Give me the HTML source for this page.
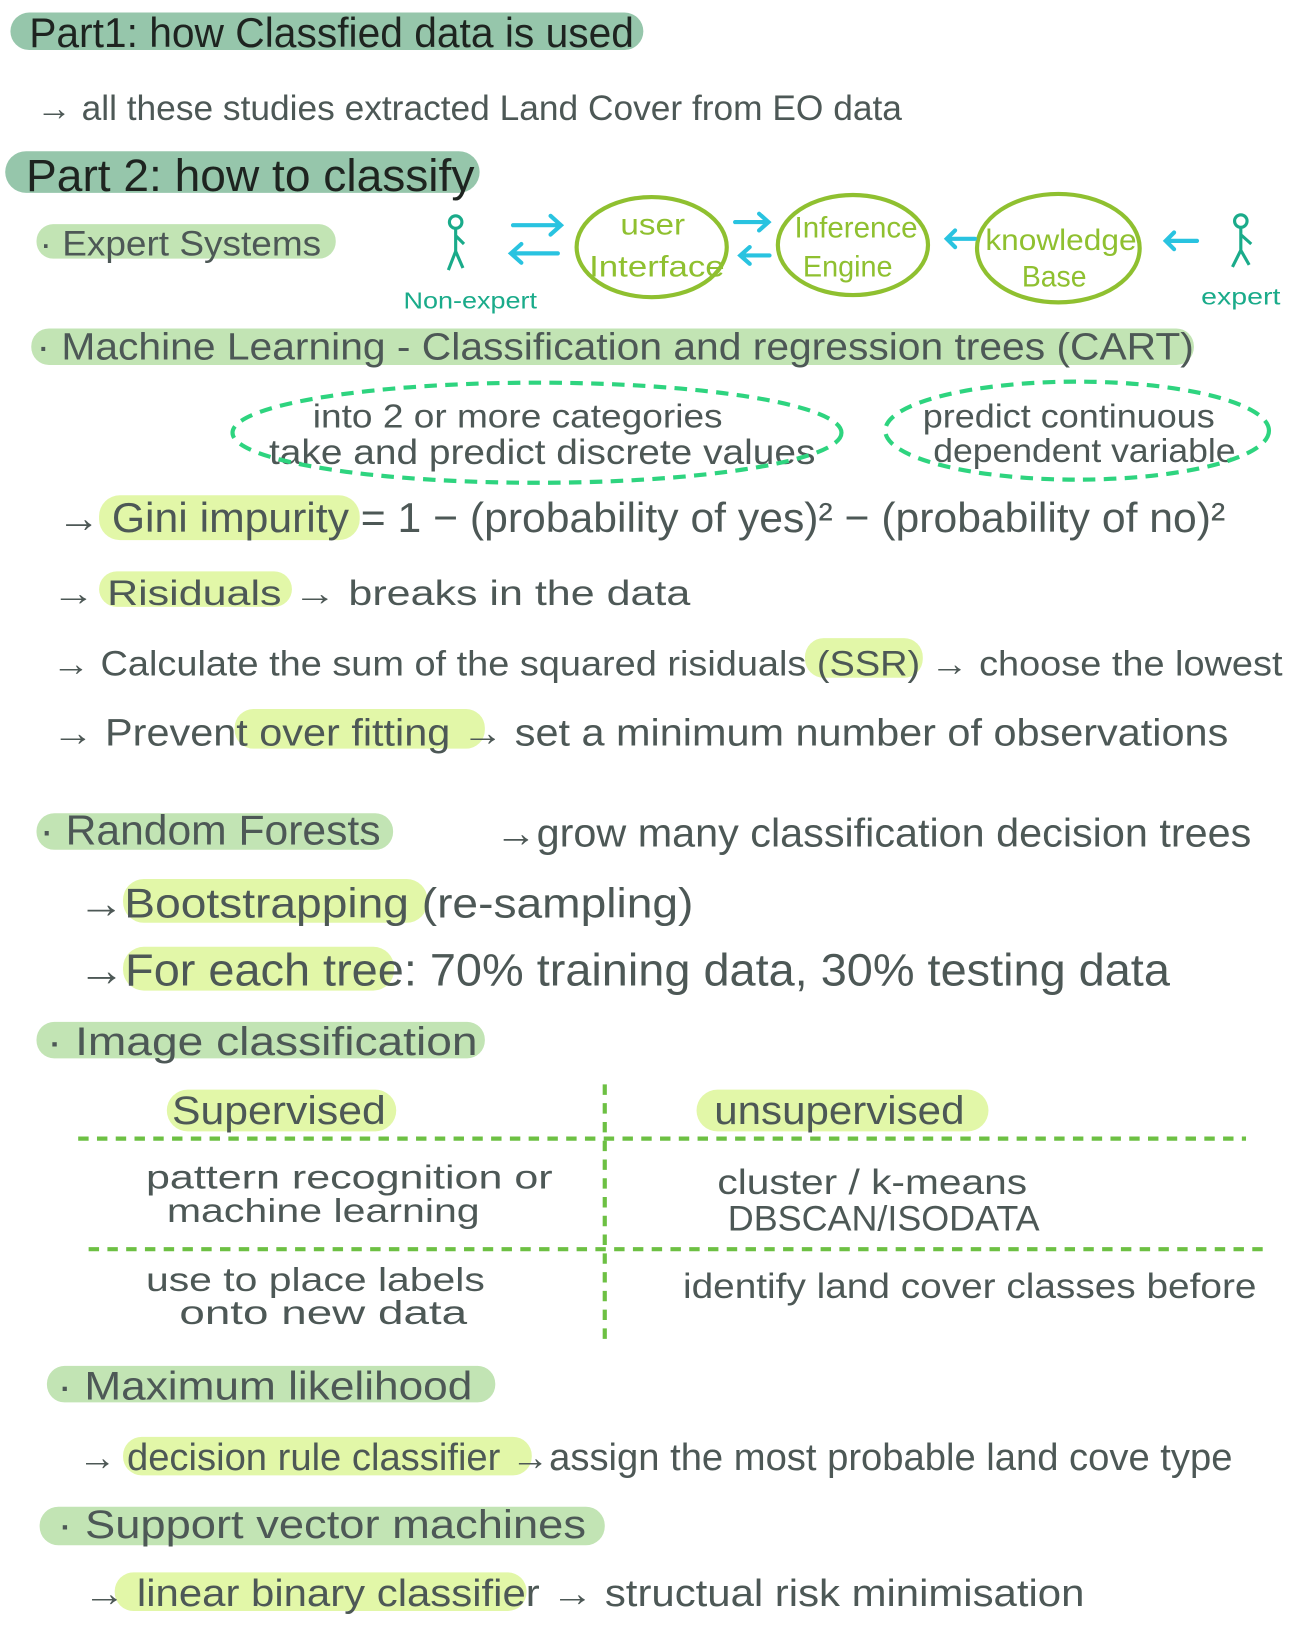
<!DOCTYPE html>
<html><head><meta charset="utf-8"><style>html,body{margin:0;padding:0;background:#fff}svg{display:block}</style></head>
<body>
<svg width="1293" height="1631" viewBox="0 0 1293 1631" xmlns="http://www.w3.org/2000/svg" font-family="Liberation Sans, sans-serif">
<g transform="scale(1.0427)">
<g>
<rect x="10" y="12" width="607" height="36" rx="18" fill="#96c6ab"/>
<rect x="5" y="145" width="455" height="40" rx="20" fill="#96c6ab"/>
<rect x="35" y="215" width="287" height="33" rx="16" fill="#c2e4b4"/>
<rect x="30" y="315" width="1115" height="35" rx="17" fill="#c2e4b4"/>
<rect x="95" y="475" width="250" height="43" rx="20" fill="#e2f7a8"/>
<rect x="95" y="548" width="185" height="34" rx="17" fill="#e2f7a8"/>
<rect x="772" y="612" width="113" height="38" rx="18" fill="#e2f7a8"/>
<rect x="225" y="680" width="240" height="38" rx="18" fill="#e2f7a8"/>
<rect x="35" y="780" width="342" height="35" rx="17" fill="#c2e4b4"/>
<rect x="118" y="843" width="292" height="42" rx="20" fill="#e2f7a8"/>
<rect x="118" y="908" width="260" height="42" rx="20" fill="#e2f7a8"/>
<rect x="35" y="980" width="430" height="35" rx="17" fill="#c2e4b4"/>
<rect x="160" y="1045" width="220" height="40" rx="20" fill="#e2f7a8"/>
<rect x="668" y="1045" width="280" height="40" rx="20" fill="#e2f7a8"/>
<rect x="45" y="1310" width="430" height="35" rx="17" fill="#c2e4b4"/>
<rect x="118" y="1378" width="392" height="37" rx="18" fill="#e2f7a8"/>
<rect x="38" y="1445" width="542" height="37" rx="18" fill="#c2e4b4"/>
<rect x="110" y="1508" width="395" height="37" rx="18" fill="#e2f7a8"/>
</g>
<g fill="#1e2420">
<text x="28" y="45" font-size="40" textLength="580" lengthAdjust="spacingAndGlyphs">Part1: how Classfied data is used</text>
<text x="25" y="183" font-size="44" textLength="430" lengthAdjust="spacingAndGlyphs">Part 2: how to classify</text>
</g>
<g fill="#4d5856">
<text x="35" y="115" font-size="34" textLength="830" lengthAdjust="spacingAndGlyphs">→ all these studies extracted Land Cover from EO data</text>
<text x="38" y="245" font-size="34" textLength="270" lengthAdjust="spacingAndGlyphs">· Expert Systems</text>
<text x="35" y="345" font-size="36" textLength="1110" lengthAdjust="spacingAndGlyphs">· Machine  Learning  - Classification and regression trees (CART)</text>
<text x="300" y="410" font-size="32" textLength="393" lengthAdjust="spacingAndGlyphs">into 2 or more categories</text>
<text x="258" y="445" font-size="34" textLength="524" lengthAdjust="spacingAndGlyphs">take and predict  discrete values</text>
<text x="885" y="410" font-size="32" textLength="280" lengthAdjust="spacingAndGlyphs">predict continuous</text>
<text x="895" y="443" font-size="32" textLength="290" lengthAdjust="spacingAndGlyphs">dependent variable</text>
<text x="55" y="510" font-size="40" textLength="1120" lengthAdjust="spacingAndGlyphs">→ Gini impurity = 1 − (probability of yes)² − (probability of no)²</text>
<text x="50" y="580" font-size="34" textLength="612" lengthAdjust="spacingAndGlyphs">→ Risiduals  → breaks  in the data</text>
<text x="50" y="648" font-size="34" textLength="1180" lengthAdjust="spacingAndGlyphs">→ Calculate the sum of the squared risiduals (SSR) → choose the lowest</text>
<text x="50" y="715" font-size="36" textLength="1128" lengthAdjust="spacingAndGlyphs">→ Prevent over fitting → set a minimum number of observations</text>
<text x="38" y="810" font-size="40" textLength="327" lengthAdjust="spacingAndGlyphs">· Random Forests</text>
<text x="475" y="812" font-size="38" textLength="725" lengthAdjust="spacingAndGlyphs">→grow many classification decision trees</text>
<text x="75" y="880" font-size="40" textLength="590" lengthAdjust="spacingAndGlyphs">→Bootstrapping (re-sampling)</text>
<text x="75" y="945" font-size="44" textLength="1047" lengthAdjust="spacingAndGlyphs">→For each tree: 70% training data, 30% testing data</text>
<text x="45" y="1012" font-size="38" textLength="413" lengthAdjust="spacingAndGlyphs">· Image classification</text>
<text x="165" y="1078" font-size="38" textLength="205" lengthAdjust="spacingAndGlyphs">Supervised</text>
<text x="685" y="1078" font-size="38" textLength="240" lengthAdjust="spacingAndGlyphs">unsupervised</text>
<text x="140" y="1140" font-size="32" textLength="390" lengthAdjust="spacingAndGlyphs">pattern recognition or</text>
<text x="160" y="1172" font-size="32" textLength="300" lengthAdjust="spacingAndGlyphs">machine learning</text>
<text x="688" y="1145" font-size="34" textLength="297" lengthAdjust="spacingAndGlyphs">cluster / k-means</text>
<text x="698" y="1180" font-size="34" textLength="299" lengthAdjust="spacingAndGlyphs">DBSCAN/ISODATA</text>
<text x="140" y="1238" font-size="32" textLength="325" lengthAdjust="spacingAndGlyphs">use to place labels</text>
<text x="172" y="1270" font-size="32" textLength="276" lengthAdjust="spacingAndGlyphs">onto  new  data</text>
<text x="655" y="1245" font-size="34" textLength="550" lengthAdjust="spacingAndGlyphs">identify land cover classes before</text>
<text x="55" y="1342" font-size="38" textLength="398" lengthAdjust="spacingAndGlyphs">· Maximum likelihood</text>
<text x="75" y="1410" font-size="36" textLength="1107" lengthAdjust="spacingAndGlyphs">→ decision rule classifier →assign the most probable land cove type</text>
<text x="55" y="1475" font-size="38" textLength="507" lengthAdjust="spacingAndGlyphs">· Support vector machines</text>
<text x="80" y="1540" font-size="36" textLength="960" lengthAdjust="spacingAndGlyphs">→ linear binary classifier → structual risk minimisation</text>
</g>
<g fill="none" stroke="#8fc030" stroke-width="4">
<ellipse cx="625" cy="237" rx="72" ry="48"/>
<ellipse cx="818" cy="235" rx="72" ry="48"/>
<ellipse cx="1015" cy="238" rx="78" ry="52"/>
</g>
<g fill="#8fc030" font-size="28">
<text x="595" y="225" textLength="62" lengthAdjust="spacingAndGlyphs">user</text>
<text x="565" y="265" textLength="130" lengthAdjust="spacingAndGlyphs">Interface</text>
<text x="762" y="228" textLength="118" lengthAdjust="spacingAndGlyphs">Inference</text>
<text x="770" y="265" textLength="86" lengthAdjust="spacingAndGlyphs">Engine</text>
<text x="945" y="240" textLength="145" lengthAdjust="spacingAndGlyphs">knowledge</text>
<text x="980" y="275" textLength="62" lengthAdjust="spacingAndGlyphs">Base</text>
</g>
<g fill="none" stroke="#29c3e0" stroke-width="4" stroke-linecap="round">
<path d="M492 216h45M528 207l10 9-10 9"/>
<path d="M490 243h45M500 234l-10 9 10 9"/>
<path d="M705 213h32M728 205l9 8-9 8"/>
<path d="M710 245h28M719 237l-9 8 9 8"/>
<path d="M908 229h27M916 221l-8 8 8 8"/>
<path d="M1118 231h30M1126 223l-8 8 8 8"/>
</g>
<g fill="none" stroke="#1aab8a" stroke-width="3">
<circle cx="437" cy="213" r="6"/><path d="M437 219v22M437 241l-7 18M437 241l7 16M437 226l8 8"/>
<circle cx="1190" cy="212" r="6"/><path d="M1190 218v22M1190 240l-8 16M1190 240l8 14M1190 225l10 9"/>
</g>
<g fill="#1aab8a" font-size="22">
<text x="387" y="296" textLength="128" lengthAdjust="spacingAndGlyphs">Non-expert</text>
<text x="1152" y="292" textLength="76" lengthAdjust="spacingAndGlyphs">expert</text>
</g>
<g fill="none" stroke="#2ed47f" stroke-width="4" stroke-dasharray="12 8">
<ellipse cx="515" cy="415" rx="292" ry="48"/>
<ellipse cx="1033" cy="413" rx="184" ry="47"/>
</g>
<g fill="none" stroke="#6dc043" stroke-width="4" stroke-dasharray="10 8">
<path d="M75 1092H1195"/>
<path d="M85 1198H1218"/>
<path d="M580 1040V1290"/>
</g>
</g>
</svg>
</body></html>
